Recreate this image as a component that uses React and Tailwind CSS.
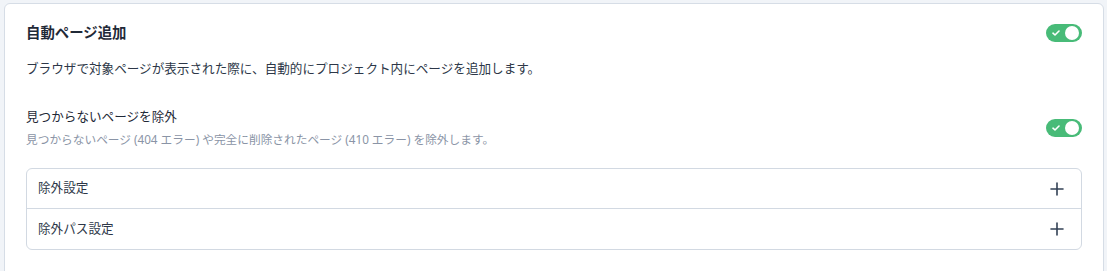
import React from "react";

function Toggle() {
  return (
    <div className="relative h-[18px] w-[36px] shrink-0 rounded-full bg-[#48bb78]">
      <svg className="absolute left-[6px] top-[5px]" width="8" height="8" viewBox="0 0 8 8">
        <path d="M1 4.2 L3 6 L7 2" stroke="white" strokeWidth="1.6" fill="none" strokeLinecap="round" strokeLinejoin="round" />
      </svg>
      <div className="absolute right-[3px] top-[2px] h-[14px] w-[14px] rounded-full bg-white" />
    </div>
  );
}

function Plus() {
  return (
    <svg width="14" height="14" viewBox="0 0 14 14">
      <path d="M7 1 V13 M1 7 H13" stroke="#334155" strokeWidth="1.6" strokeLinecap="round" />
    </svg>
  );
}

export default function App() {
  return (
    <div
      className="h-[271px] w-[1107px] overflow-hidden bg-[#f1f4f8] pl-[4px] pr-[3px] pt-[3px]"
      style={{ fontFamily: '"Noto Sans", "Noto Sans CJK JP", sans-serif' }}
    >
      <div className="h-[300px] rounded-[6px] border border-[#d6dde6] bg-white px-[21px] pt-[17px]">
        <div className="flex items-center justify-between">
          <div className="text-[14.4px] font-bold leading-[24px] text-[#1f2937]">自動ページ追加</div>
          <Toggle />
        </div>
        <div className="mt-[14px] text-[12.6px] leading-[20px] text-[#2d3748]">
          ブラウザで対象ページが表示された際に、自動的にプロジェクト内にページを追加します。
        </div>
        <div className="mt-[28px] flex items-center justify-between">
          <div>
            <div className="text-[12.6px] leading-[20px] text-[#1f2937]">見つからないページを除外</div>
            <div className="mt-[3px] text-[11.7px] leading-[18px] text-[#8a94a6]">
              見つからないページ (404 エラー) や完全に削除されたページ (410 エラー) を除外します。
            </div>
          </div>
          <Toggle />
        </div>
        <div className="mt-[20px] rounded-[6px] border border-[#d2d9e2]">
          <div className="flex h-[40px] items-center justify-between border-b border-[#d2d9e2] pl-[11px] pr-[17px]">
            <span className="text-[12.6px] text-[#2d3748]">除外設定</span>
            <Plus />
          </div>
          <div className="flex h-[40px] items-center justify-between pl-[11px] pr-[17px]">
            <span className="text-[12.6px] text-[#2d3748]">除外パス設定</span>
            <Plus />
          </div>
        </div>
      </div>
    </div>
  );
}
